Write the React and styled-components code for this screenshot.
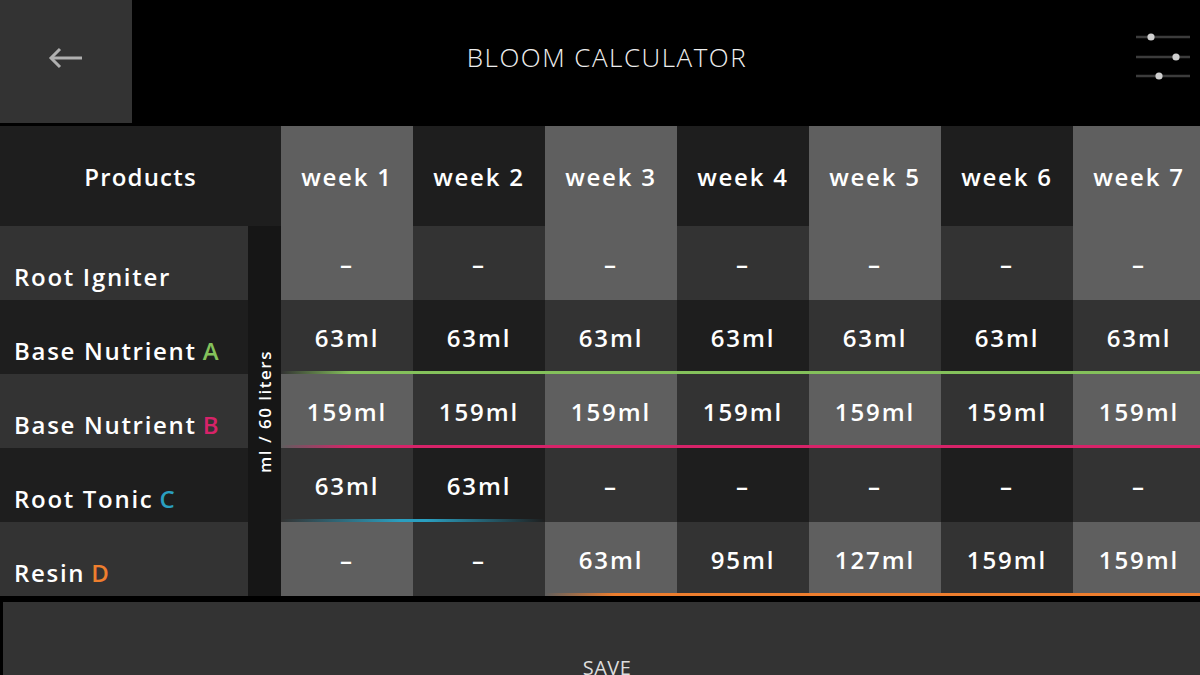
import React from "react";
import styled, { createGlobalStyle } from "styled-components";

const GlobalStyle = createGlobalStyle`
  html, body {
    margin: 0;
    padding: 0;
    background: #000;
    overflow: hidden;
  }
  body {
    font-family: "Open Sans", "Noto Sans", sans-serif;
    color: #fff;
  }
`;

const Screen = styled.div`
  width: 1214px;
  height: 675px;
  background: #000;
  overflow: hidden;
`;

const TopBar = styled.div`
  display: grid;
  grid-template-columns: 132px 1fr 132px;
  height: 123px;
  margin-bottom: 3px;
`;

const BackButton = styled.button`
  border: none;
  padding: 0;
  background: #333;
  display: flex;
  align-items: center;
  justify-content: center;
  padding-bottom: 8px;
  cursor: pointer;
`;

const Title = styled.h1`
  margin: 0;
  display: flex;
  justify-content: center;
  padding-top: 39px;
  font-size: 26px;
  font-weight: 300;
  letter-spacing: 1.5px;
  color: #eee;
`;

const SettingsButton = styled.div`
  display: flex;
  justify-content: flex-end;
  align-items: flex-start;
  padding: 32px 24px 0 0;
`;

const Table = styled.div`
  display: grid;
  grid-template-columns: 248px 33px repeat(7, 132px);
  grid-template-rows: 100px repeat(5, 74px);
`;

const ProductsHead = styled.div`
  grid-column: 1 / 3;
  background: #1e1e1e;
  display: flex;
  align-items: center;
  justify-content: center;
  font-size: 24px;
  font-weight: 600;
  letter-spacing: 1.2px;
`;

const WeekHead = styled.div`
  background: ${({ $odd }) => ($odd ? "#5f5f5f" : "#1e1e1e")};
  display: flex;
  align-items: center;
  justify-content: center;
  font-size: 24px;
  font-weight: 600;
  letter-spacing: 1.8px;
`;

const Label = styled.div`
  grid-column: 1;
  background: ${({ $light }) => ($light ? "#333" : "#1e1e1e")};
  display: flex;
  align-items: flex-end;
  padding: 0 0 7px 14px;
  font-size: 24px;
  font-weight: 600;
  letter-spacing: 1.7px;
  white-space: nowrap;
`;

const Letter = styled.span`
  color: ${({ $color }) => $color};
  margin-left: 6px;
`;

const UnitColumn = styled.div`
  grid-column: 2;
  grid-row: 2 / 7;
  background: #161616;
  display: flex;
  align-items: center;
  justify-content: center;
`;

const UnitText = styled.span`
  writing-mode: vertical-rl;
  transform: rotate(180deg);
  font-size: 17px;
  font-weight: 600;
  letter-spacing: 1.5px;
  white-space: nowrap;
`;

const Cell = styled.div`
  background: ${({ $light, $odd }) =>
    $light ? ($odd ? "#5f5f5f" : "#333") : $odd ? "#333" : "#1e1e1e"};
  display: flex;
  align-items: center;
  justify-content: center;
  font-size: 24px;
  font-weight: 600;
  letter-spacing: 1.9px;
`;

const ColorLine = styled.div`
  align-self: end;
  height: 3px;
  background: ${({ $color, $fade }) =>
    $fade === "both"
      ? `linear-gradient(to right, transparent, ${$color} 45%, ${$color} 55%, transparent)`
      : `linear-gradient(to right, transparent, ${$color} 70px)`};
`;

const SaveButton = styled.button`
  display: flex;
  justify-content: center;
  width: calc(100% - 6px);
  height: 130px;
  margin: 6px 3px 0;
  border: none;
  background: #333;
  color: #ddd;
  font-family: "Open Sans", "Noto Sans", sans-serif;
  font-size: 20px;
  font-weight: 400;
  letter-spacing: 0.5px;
  padding-top: 52px;
`;

const weeks = [1, 2, 3, 4, 5, 6, 7];

const products = [
  { name: "Root Igniter", values: ["–", "–", "–", "–", "–", "–", "–"] },
  {
    name: "Base Nutrient",
    letter: "A",
    color: "#84c15b",
    values: Array(7).fill("63ml"),
    line: { from: 0, to: 6, fade: "left" },
  },
  {
    name: "Base Nutrient",
    letter: "B",
    color: "#d72369",
    values: Array(7).fill("159ml"),
    line: { from: 0, to: 6, fade: "left" },
  },
  {
    name: "Root Tonic",
    letter: "C",
    color: "#2a9fc0",
    values: ["63ml", "63ml", "–", "–", "–", "–", "–"],
    line: { from: 0, to: 1, fade: "both" },
  },
  {
    name: "Resin",
    letter: "D",
    color: "#ee7e2e",
    values: ["–", "–", "63ml", "95ml", "127ml", "159ml", "159ml"],
    line: { from: 2, to: 6, fade: "left" },
  },
];

const BackArrow = () => (
  <svg width="36" height="24" viewBox="0 0 36 24" fill="none">
    <path d="M3 12 H34" stroke="#b0b0b0" strokeWidth="3" />
    <path d="M12 3 L3 12 L12 21" stroke="#b0b0b0" strokeWidth="3" />
  </svg>
);

const SlidersIcon = () => (
  <svg width="54" height="48" viewBox="0 0 54 48">
    <g stroke="#3c3c3c" strokeWidth="2.5">
      <line x1="0" y1="5" x2="54" y2="5" />
      <line x1="0" y1="25" x2="54" y2="25" />
      <line x1="0" y1="44" x2="54" y2="44" />
    </g>
    <g fill="#cfcfcf">
      <circle cx="15" cy="5" r="3.6" />
      <circle cx="40" cy="25" r="3.6" />
      <circle cx="23" cy="44" r="3.6" />
    </g>
  </svg>
);

const App = () => {
  return (
    <Screen>
      <GlobalStyle />
      <TopBar>
        <BackButton>
          <BackArrow />
        </BackButton>
        <Title>BLOOM CALCULATOR</Title>
        <SettingsButton>
          <SlidersIcon />
        </SettingsButton>
      </TopBar>
      <Table>
        <ProductsHead>Products</ProductsHead>
        {weeks.map((w) => (
          <WeekHead key={w} $odd={w % 2 === 1}>
            week {w}
          </WeekHead>
        ))}
        <UnitColumn>
          <UnitText>ml / 60 liters</UnitText>
        </UnitColumn>
        {products.map((p, r) => {
          const light = r % 2 === 0;
          const row = r + 2;
          return (
            <React.Fragment key={r}>
              <Label $light={light} style={{ gridRow: row }}>
                {p.name}
                {p.letter && <Letter $color={p.color}>{p.letter}</Letter>}
              </Label>
              {p.values.map((v, i) => (
                <Cell
                  key={i}
                  $light={light}
                  $odd={i % 2 === 0}
                  style={{ gridRow: row, gridColumn: i + 3 }}
                >
                  {v}
                </Cell>
              ))}
              {p.line && (
                <ColorLine
                  $color={p.color}
                  $fade={p.line.fade}
                  style={{
                    gridRow: row,
                    gridColumn: `${p.line.from + 3} / ${p.line.to + 4}`,
                  }}
                />
              )}
            </React.Fragment>
          );
        })}
      </Table>
      <SaveButton>SAVE</SaveButton>
    </Screen>
  );
};

export default App;
